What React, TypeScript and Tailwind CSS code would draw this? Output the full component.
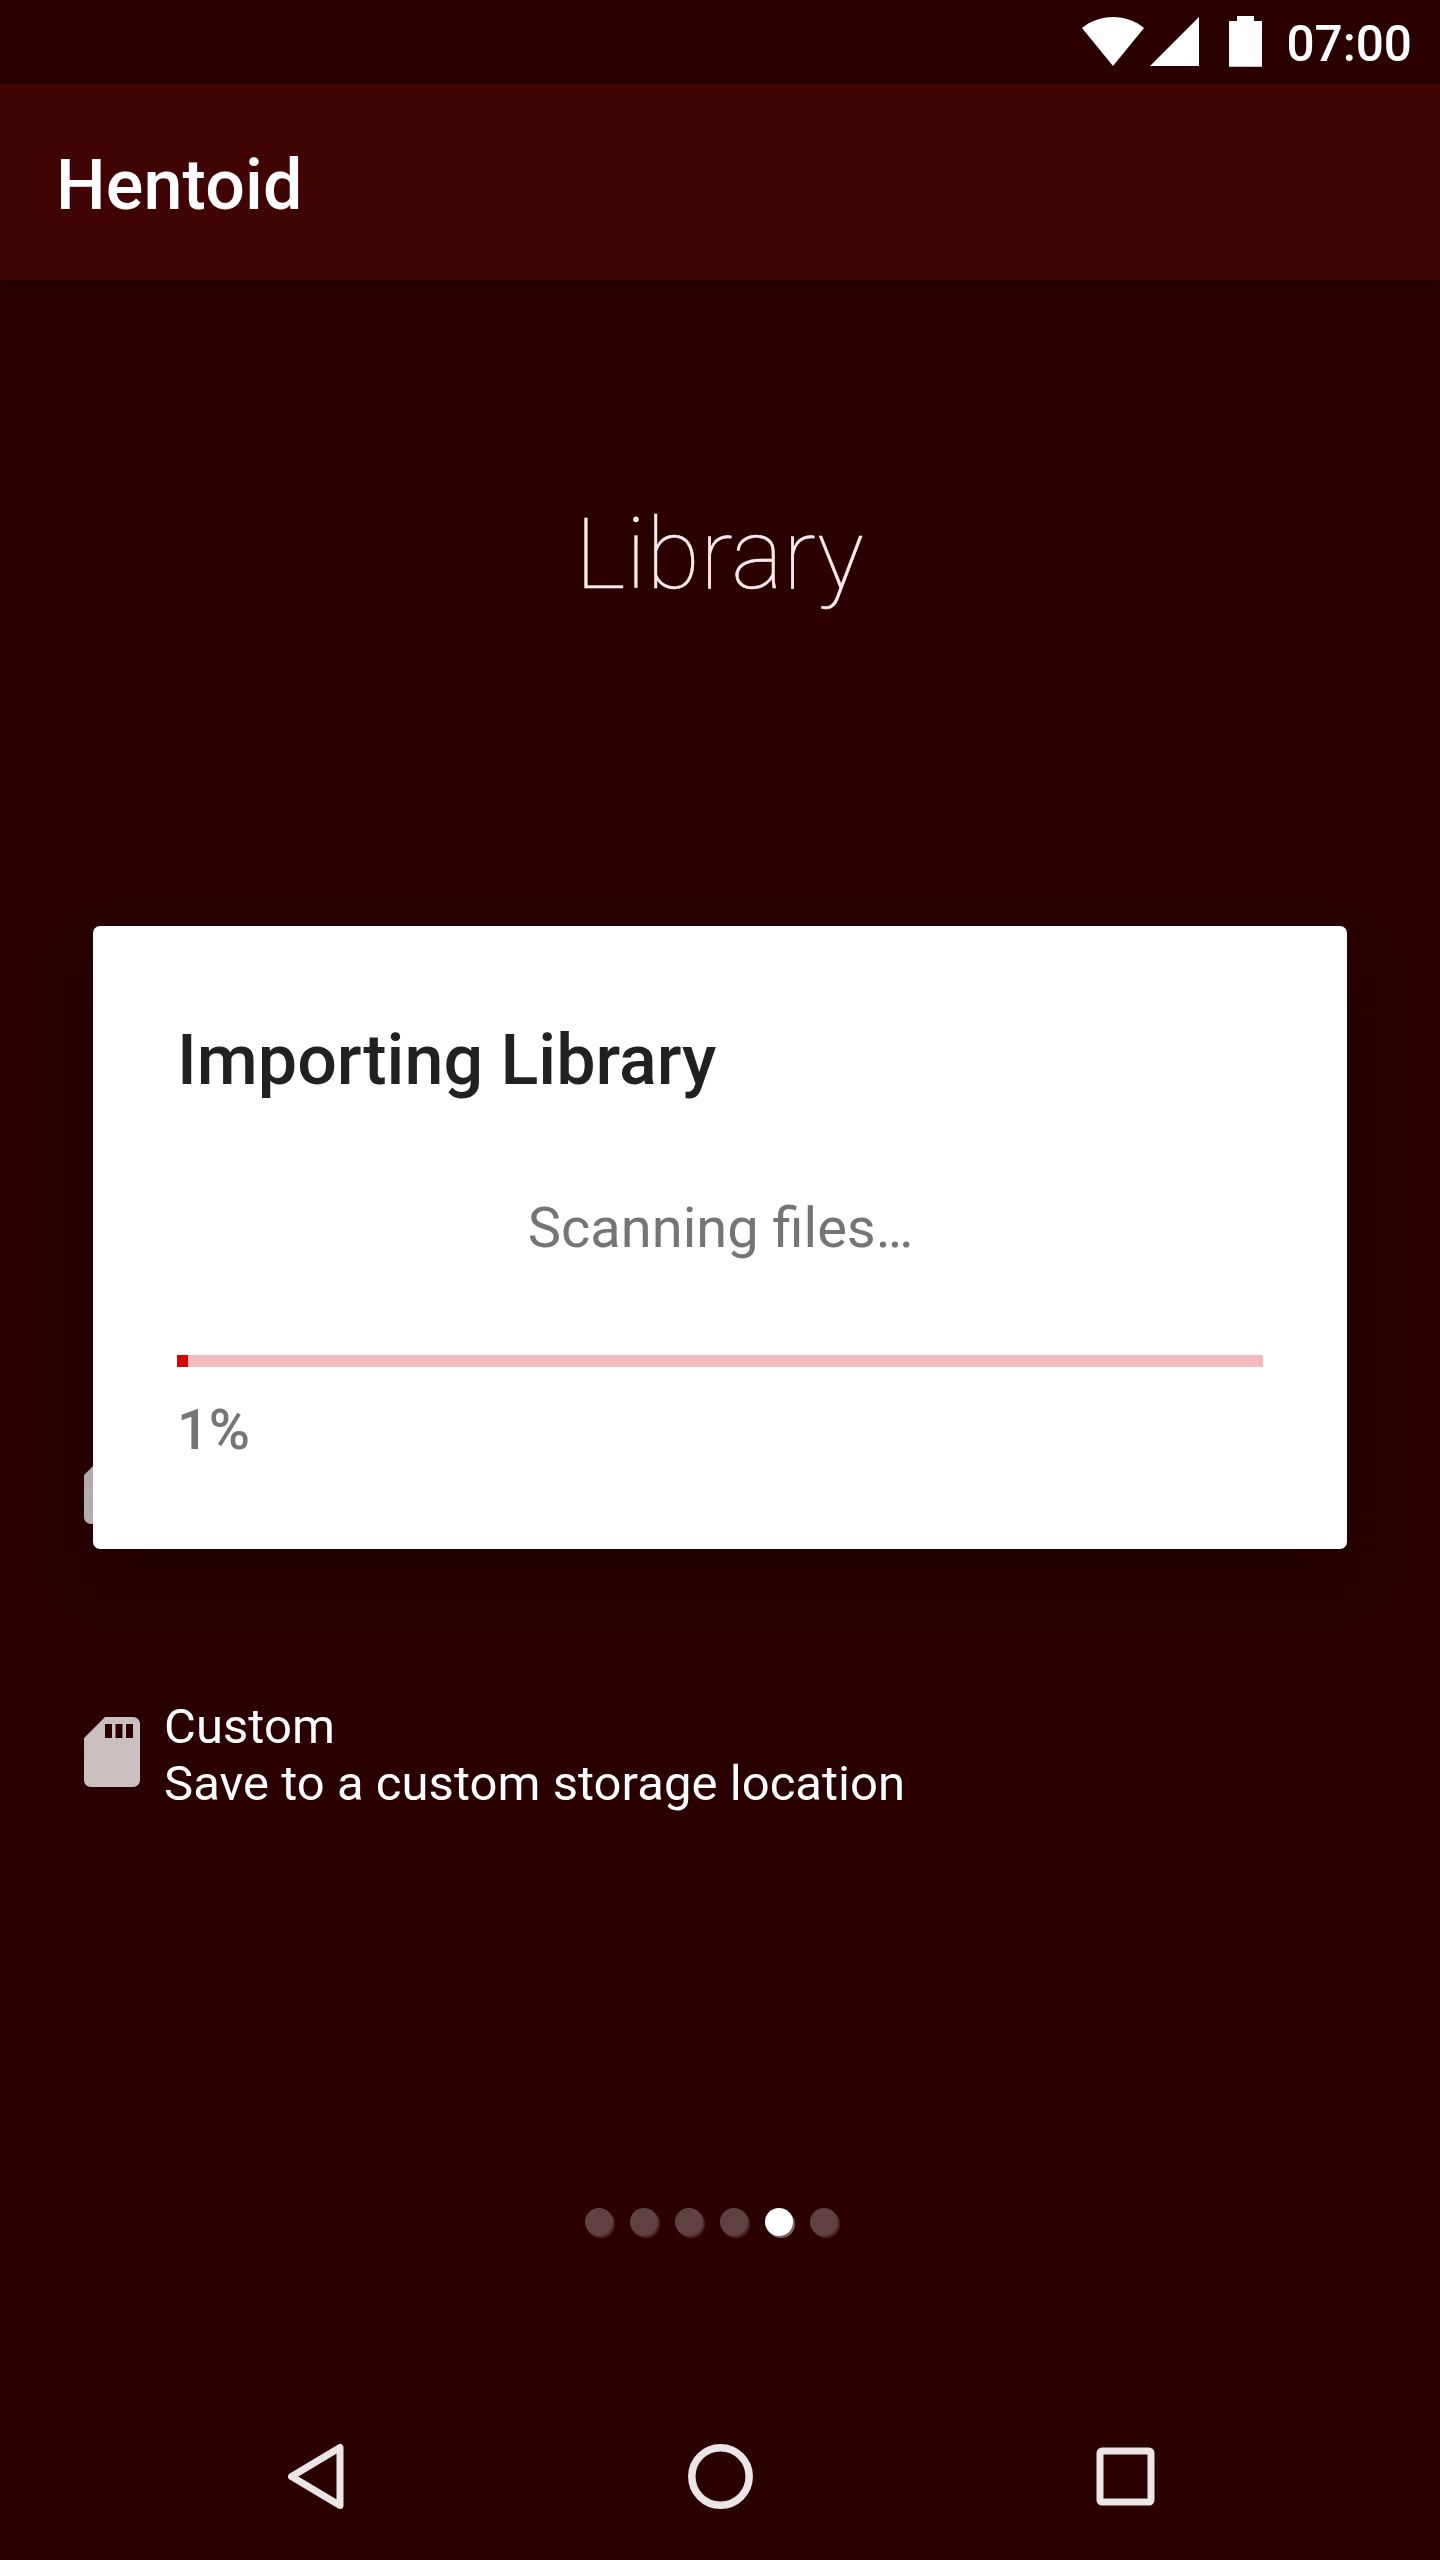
const sdCardPath =
  "M18 2h-8L4.020 8 4 20c0 1.100.9 2 2 2h12c1.100 0 2-.9 2-2V4c0-1.100-.9-2-2-2zm-6 6h-2V4h2v4zm3 0h-2V4h2v4zm3 0h-2V4h2v4z";

function StatusBar() {
  return (
    <div className="flex h-[84px] items-start justify-end pr-[28px] text-white">
      <svg className="mt-[17px] h-[49px] w-[62px]" viewBox="0 0 62 49" fill="currentColor">
        <path d="M31 49 0 11C8.500 4 19 0 31 0s22.500 4 31 11Z" />
      </svg>
      <svg className="mt-[17px] ml-[6px] h-[49px] w-[49px]" viewBox="0 0 49 49" fill="currentColor">
        <path d="M49 0v49H0Z" />
      </svg>
      <svg className="mt-[16px] ml-[30px] h-[51px] w-[33px]" viewBox="0 0 33 51" fill="currentColor">
        <path d="M8 0h17v5h8v45.700H0V5h8Z" />
      </svg>
      <div className="mt-[16px] flex w-[150px] justify-end">
        <span className="text-[49.500px] leading-[57px] font-medium">07:00</span>
      </div>
    </div>
  );
}

function StorageOption({ title, detail }: { title?: string; detail?: string }) {
  return (
    <div className="flex h-[115px] items-center gap-[10px] pl-[70px] text-[49px] leading-[57px] tracking-[0.04px] text-white">
      <svg className="h-[84px] w-[84px] shrink-0" viewBox="0 0 24 24" fill="#cbc0c0">
        <path d={sdCardPath} />
      </svg>
      {title && (
        <div className="pt-[7px]">
          <p>{title}</p>
          <p>{detail}</p>
        </div>
      )}
    </div>
  );
}

function PageDots({ count, active }: { count: number; active: number }) {
  return (
    <div className="mt-[399px] flex gap-[17px] pl-[585px]">
      {Array.from({ length: count }, (_, i) => (
        <span
          key={i}
          className={
            i === active
              ? "size-[28px] rounded-full bg-white shadow-[2px_2px_0_#7f6666]"
              : "size-[28px] rounded-full bg-[#604141] shadow-[2px_2px_0_#482424]"
          }
        />
      ))}
    </div>
  );
}

function NavBar() {
  return (
    <div className="mt-auto flex h-[168px] items-center justify-center gap-[321px] text-[#eae6e6]">
      <svg className="size-[84px]" viewBox="0 0 84 84" fill="none" stroke="currentColor" strokeWidth="7" strokeLinejoin="round">
        <path d="M67 13.500v58L18.500 42.500Z" />
      </svg>
      <svg className="size-[84px]" viewBox="0 0 84 84" fill="none" stroke="currentColor" strokeWidth="7.500">
        <circle cx="42.500" cy="42.500" r="28.700" />
      </svg>
      <svg className="size-[84px]" viewBox="0 0 84 84" fill="none" stroke="currentColor" strokeWidth="7">
        <rect x="17" y="17" width="51" height="51" rx="2" />
      </svg>
    </div>
  );
}

function ImportDialog() {
  return (
    <div className="absolute top-[926px] left-[93px] flex h-[623px] w-[1254px] flex-col rounded-[7px] bg-white px-[84px] shadow-[0_28px_60px_rgba(0,0,0,0.24)]">
      <h2 className="mt-[93px] text-[70px] leading-[82px] font-medium text-[#212121]">Importing Library</h2>
      <p className="mt-[94px] pl-px text-center text-[56px] leading-[66px] text-[#757575]">Scanning files…</p>
      <div className="mt-[94px] h-[12px] bg-[#f4bcbc]">
        <div className="h-full w-[1%] bg-[#d50000]" />
      </div>
      <p className="mt-[30px] text-[56px] leading-[66px] font-medium text-[#757575]">1%</p>
    </div>
  );
}

export default function App() {
  return (
    <div className="relative flex h-[2560px] w-[1440px] flex-col overflow-hidden bg-[#2a0000] font-['Roboto',sans-serif]">
      <StatusBar />
      <header className="flex h-[196px] items-center bg-[#400404] px-[56px] shadow-[0_6px_14px_rgba(0,0,0,0.22)]">
        <h1 className="mt-[6px] text-[70px] leading-[82px] font-medium tracking-[0.15px] text-white">Hentoid</h1>
      </header>
      <h2 className="mt-[217px] pr-px text-center text-[98px] leading-[115px] font-thin tracking-[0.2px] text-[#ffebee] [-webkit-text-stroke:0.4px_#ffebee]">
        Library
      </h2>
      <div className="mt-[819px] flex flex-col gap-[148px]">
        <StorageOption />
        <StorageOption title="Custom" detail="Save to a custom storage location" />
      </div>
      <PageDots count={6} active={4} />
      <NavBar />
      <ImportDialog />
    </div>
  );
}
